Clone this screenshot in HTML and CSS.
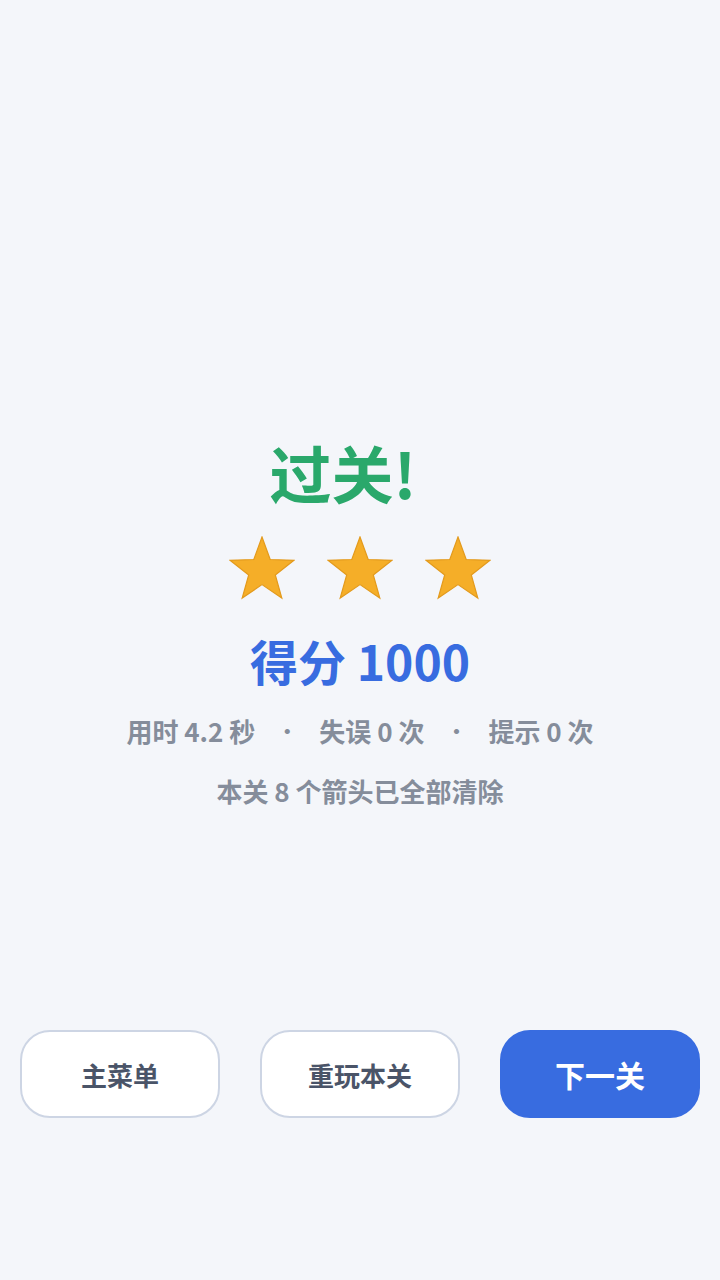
FILE: index.html
```html
<!DOCTYPE html>
<html lang="zh-CN">
<head>
<meta charset="utf-8">
<link rel="stylesheet" href="styles.css">
</head>
<body>
<div class="screen">
  <main class="result">
    <h1 class="title">过关!</h1>
    <div class="stars">
      <svg class="star" viewBox="0 0 66 64"><polygon points="33,1 41.2,23.5 65,24.3 46.3,39 52.8,62 33,48.6 13.2,62 19.7,39 1,24.3 24.8,23.5"/></svg>
      <svg class="star" viewBox="0 0 66 64"><polygon points="33,1 41.2,23.5 65,24.3 46.3,39 52.8,62 33,48.6 13.2,62 19.7,39 1,24.3 24.8,23.5"/></svg>
      <svg class="star" viewBox="0 0 66 64"><polygon points="33,1 41.2,23.5 65,24.3 46.3,39 52.8,62 33,48.6 13.2,62 19.7,39 1,24.3 24.8,23.5"/></svg>
    </div>
    <div class="score">得分 1000</div>
    <div class="stats">
      <span>用时 4.2 秒</span><span class="dot">•</span><span>失误 0 次</span><span class="dot">•</span><span>提示 0 次</span>
    </div>
    <div class="note">本关 8 个箭头已全部清除</div>
  </main>
  <nav class="actions">
    <button class="btn">主菜单</button>
    <button class="btn">重玩本关</button>
    <button class="btn primary">下一关</button>
  </nav>
</div>
</body>
</html>
```
FILE: styles.css
```css
html, body {
  margin: 0;
  padding: 0;
  background: #f4f6fa;
}
body {
  font-family: "Noto Sans CJK SC", "Noto Sans", sans-serif;
}
.screen {
  width: 720px;
  height: 1280px;
  display: flex;
  flex-direction: column;
}
.result {
  padding-top: 430px;
  display: flex;
  flex-direction: column;
  align-items: center;
  height: 1030px;
  flex-shrink: 0;
  box-sizing: border-box;
}
.title {
  margin: 0;
  padding-right: 34px;
  font-size: 62px;
  line-height: 84px;
  font-weight: 700;
  color: #2aa86b;
}
.stars {
  margin-top: 22px;
  display: flex;
  gap: 32px;
}
.star {
  width: 66px;
  height: 64px;
  display: block;
}
.star polygon {
  fill: #f5ae28;
  stroke: #e39a1c;
  stroke-width: 1.2;
  stroke-linejoin: miter;
}
.score {
  margin-top: 30px;
  font-size: 48px;
  line-height: 60px;
  font-weight: 700;
  color: #386ce0;
}
.stats {
  margin-top: 21px;
  font-size: 26px;
  line-height: 40px;
  font-weight: 700;
  color: #858d9b;
  display: flex;
  gap: 22px;
}
.stats .dot {
  font-size: 20px;
}
.note {
  margin-top: 20px;
  font-size: 26px;
  line-height: 40px;
  font-weight: 700;
  color: #858d9b;
}
.actions {
  display: flex;
  gap: 40px;
  padding: 0 20px;
}
.btn {
  flex: 1;
  height: 88px;
  border-radius: 30px;
  border: 2px solid #cdd5e4;
  background: #ffffff;
  font-family: "Noto Sans CJK SC", "Noto Sans", sans-serif;
  font-size: 26px;
  font-weight: 700;
  color: #4a5468;
  padding: 0;
}
.btn.primary {
  background: #386ce0;
  border-color: #386ce0;
  color: #ffffff;
  font-size: 30px;
}
```
